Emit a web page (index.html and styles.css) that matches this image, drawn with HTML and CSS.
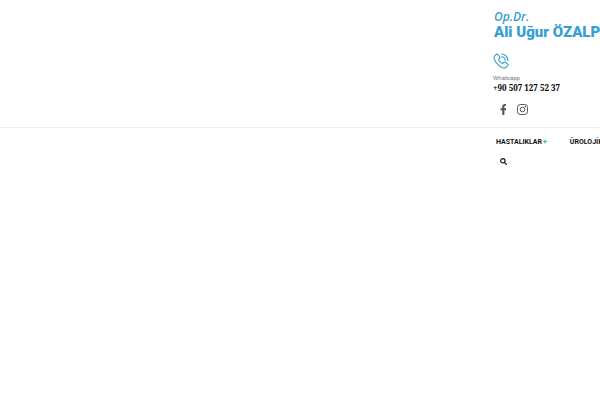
FILE: index.html
```html
<!DOCTYPE html>
<html lang="tr">
<head>
<meta charset="utf-8">
<meta name="viewport" content="width=device-width, initial-scale=1">
<title>Op.Dr. Ali Uğur ÖZALP</title>
<link rel="stylesheet" href="styles.css">
</head>
<body>
<header class="header">
  <div class="top">
    <a class="logo" href="#"><span class="logo-title">Op.Dr.</span><span class="logo-name">Ali Uğur ÖZALP</span></a>
    <div class="contact">
      <svg class="phone" viewBox="0 0 32 32" fill="none" stroke="#46a3cb" stroke-width="2.400" stroke-linecap="round" stroke-linejoin="round" aria-hidden="true">
        <path d="M7 2.5 2.8 6.7C.5 10 4 17.500 9.500 22.800S22 31.500 25.500 29.200L29.500 25.200Q30.800 23.600 29 22L24.500 18.600Q22.800 17.500 21.300 19L19.300 21Q17.800 21.500 14.300 17.900T11 12.800L13 10.800Q14.500 9.200 13.400 7.600L10 3Q8.500 1.300 7 2.500Z"/>
        <path d="M17 2A13.500 13.500 0 0 1 30 15M17 7.500A8 8 0 0 1 24.500 15"/>
      </svg>
      <span class="label">Whatsapp</span>
      <a class="number" href="tel:+905071275237">+90 507 127 52 37</a>
    </div>
    <div class="social">
      <a href="#" aria-label="Facebook"><svg viewBox="0 0 320 512" aria-hidden="true"><path d="M279 288l14-93h-89v-60c0-25 13-50 53-50h40V7s-37-7-72-7c-73 0-121 44-121 125v70H23v93h81v224h100V288z"/></svg></a>
      <a href="#" aria-label="Instagram"><svg viewBox="1 1 22 22" aria-hidden="true"><rect x="2" y="2" width="20" height="20" rx="6" fill="none" stroke="currentColor" stroke-width="2"/><circle cx="12" cy="12" r="4.600" fill="none" stroke="currentColor" stroke-width="2"/><circle cx="17.700" cy="6.300" r="1.400"/></svg></a>
    </div>
  </div>
  <nav class="nav">
    <div class="menu">
      <a href="#">HASTALIKLAR<span class="plus">+</span></a>
      <a href="#">ÜROLOJİK</a>
    </div>
    <button class="search" type="button" aria-label="Ara"><svg viewBox="0 0 16 16" aria-hidden="true"><circle cx="6.500" cy="6.500" r="5" fill="none" stroke="currentColor" stroke-width="2.600"/><path d="m10 10 4.500 4.500" stroke="currentColor" stroke-width="3" stroke-linecap="round"/></svg></button>
  </nav>
</header>
</body>
</html>
```

FILE: styles.css
```css
body {
  margin: 0;
  background: #fff;
  color: #111;
  font-family: Roboto, "Liberation Sans", sans-serif;
}

a {
  color: inherit;
  text-decoration: none;
}

svg {
  display: block;
  fill: currentColor;
}

.header {
  overflow: hidden;
}

.top,
.nav {
  display: flex;
  flex-direction: column;
  align-items: flex-start;
  padding-left: 82%;
  white-space: nowrap;
}

.top {
  padding-top: 9px;
  padding-bottom: 11px;
  border-bottom: 1px solid #f0f0f0;
}

.logo {
  display: flex;
  flex-direction: column;
  padding-left: 2px;
  color: #36a0d4;
}

.logo-title {
  font-family: "Open Sans", sans-serif;
  font-size: 12px;
  font-style: italic;
  font-weight: 600;
  line-height: 16px;
}

.logo-name {
  font-size: 15px;
  font-weight: 900;
  line-height: 14px;
}

.contact {
  display: flex;
  flex-direction: column;
  margin-top: 14px;
  padding-left: 1px;
}

.phone {
  width: 16px;
  height: 16px;
  fill: none;
}

.label {
  margin-top: 5px;
  color: #777;
  font-size: 6px;
  line-height: 8px;
}

.number {
  color: #000;
  font-family: "Noto Serif", "Liberation Serif", serif;
  font-size: 8px;
  font-weight: 700;
  line-height: 12px;
}

.social {
  display: flex;
  gap: 7px;
  margin-top: 8px;
  padding-left: 5px;
  color: #555;
}

.social a {
  display: grid;
  place-items: center;
  width: 12px;
  height: 14px;
}

.social svg {
  height: 11px;
}

.nav {
  padding-top: 8px;
}

.menu {
  display: flex;
  gap: 23px;
  padding-left: 4px;
  font-size: 7px;
  font-weight: 700;
  line-height: 12px;
}

.plus {
  margin-left: 1px;
  color: #2bb59b;
}

.search {
  margin-top: 10px;
  margin-left: 8px;
  padding: 0;
  border: 0;
  background: none;
  color: #111;
}

.search svg {
  width: 7px;
  height: 7px;
}
```
